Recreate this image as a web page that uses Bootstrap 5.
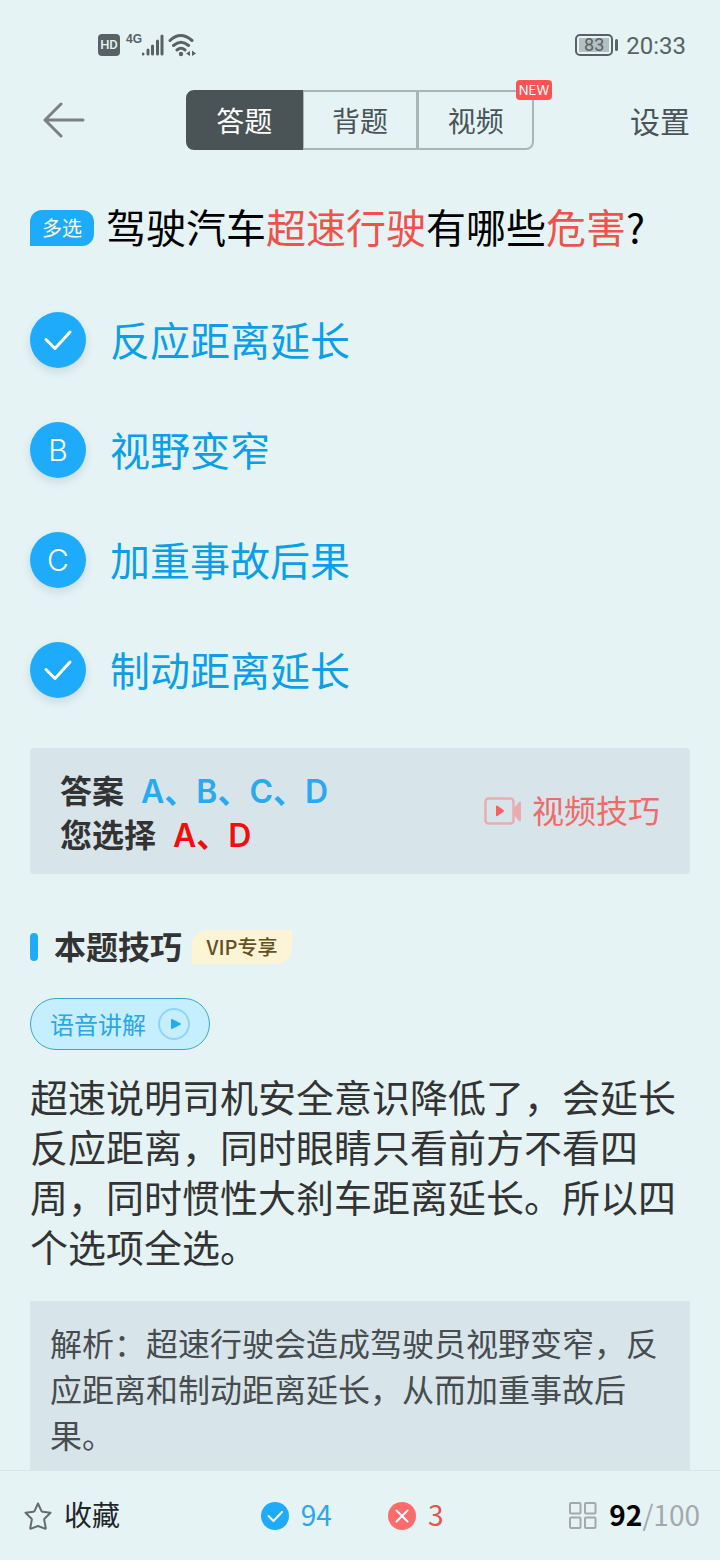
<!DOCTYPE html>
<html lang="zh-CN">
<head>
<meta charset="utf-8">
<meta name="viewport" content="width=device-width, initial-scale=1">
<title>答题</title>
<link rel="stylesheet" href="https://cdn.jsdelivr.net/npm/bootstrap@5.3.0/dist/css/bootstrap.min.css">
<style>
:root { --sky: #1eabfb; --page: #e5f3f5; --panel: #d7e5ea; --slate: #4a5456; }
body { background: var(--page); color: #333; font-family: "Noto Sans CJK SC", sans-serif; }
svg { display: block; flex: none; }
button { color: inherit; }
.latin { font-family: Inter, "Noto Sans CJK SC", sans-serif; }
.plain-btn { border: 0; background: none; padding: 0; }

.status-bar { height: 90px; padding: 0 34px 0 98px; color: #586264; }
.hd-mark { width: 22px; height: 22px; border-radius: 4px; background: #586264; color: var(--page); font: 500 13px/22px Roboto, sans-serif; text-align: center; }
.net-mark { font: 700 12px/14px "Liberation Sans", sans-serif; margin: 0 0 12px 6px; }
.battery { width: 38px; height: 22px; border: 2px solid #586264; border-radius: 5px; padding: 2px; }
.battery-level { background: #b3bfc1; font: 400 18px/14px Roboto, sans-serif; text-align: center; }
.battery-tip { width: 3px; height: 12px; border-radius: 2px; background: #586264; margin-left: 2px; }
.clock { font: 400 24px/28px Roboto, sans-serif; margin-left: 8px; padding-top: 2px; }

.top-row { height: 60px; padding: 0 30px; color: var(--slate); }
.back-btn { width: 60px; padding-left: 13px; }
.mode-tabs { width: 348px; }
.mode-tabs .btn { --bs-btn-color: #4a5456; --bs-btn-border-color: #a9b5b7; --bs-btn-border-width: 2px; --bs-btn-border-radius: 8px; --bs-btn-active-color: #fff; --bs-btn-active-bg: #4a5456; --bs-btn-active-border-color: #4a5456; --bs-btn-padding-x: 0; --bs-btn-padding-y: 0; flex: 1 1 0; height: 60px; font-size: 28px; line-height: 56px; }
.mode-tabs .btn + .btn { margin-left: -2px; }
.new-mark { position: absolute; top: -12px; right: -20px; width: 36px; height: 20px; border-radius: 4px; background: #fb5252; color: #fff; font: 400 13px/20px Inter, sans-serif; z-index: 2; }
.settings-btn { font-size: 30px; line-height: 60px; }

main { padding: 50px 30px 0; }
.question { font-size: 40px; line-height: 52px; color: #000; font-weight: 400; }
.question em { font-style: normal; color: #f0524b; }
.kind-tag { width: 64px; height: 36px; margin-top: 4px; border-radius: 12px 12px 12px 0; background: var(--sky); color: #fff; font-size: 20px; line-height: 36px; text-align: center; }
.options { margin-top: 60px; gap: 54px; }
.option { height: 56px; gap: 24px; font-size: 40px; line-height: 54px; color: #0b9fe9; cursor: pointer; }
.option-dot { width: 56px; height: 56px; border-radius: 50%; background: var(--sky); color: #fff; font: 300 30px/56px Inter, sans-serif; text-align: center; box-shadow: 0 4px 8px rgba(60, 90, 110, .16); }
.option-dot svg { display: none; margin: 14px; }
.btn-check:checked + .option svg { display: block; }
.btn-check:checked + .option .option-letter { display: none; }

.answer-box { margin-top: 50px; padding: 19px 30px; border-radius: 4px; background: var(--panel); font-size: 32px; line-height: 44px; font-weight: 700; }
.answer-box dl div { height: 44px; gap: 17px; }
.answer-box dt, .answer-box dd { margin: 0; font-weight: inherit; }
.answer-box dd { font-weight: 600; }
.video-link { color: #f26a68; font-weight: 400; gap: 10px; }

.tips-title { margin-top: 50px; height: 46px; }
.tips-title::before { content: ""; width: 8px; height: 28px; border-radius: 4px; background: var(--sky); margin-right: 16px; }
.tips-title h2 { font-size: 32px; line-height: 44px; font-weight: 700; }
.vip-tag { width: 100px; height: 34px; margin-left: 10px; border-radius: 16px 0 16px 0; background: #fdf3d5; color: #635126; font-size: 20px; line-height: 34px; font-weight: 500; text-align: center; }
.audio-btn { margin-top: 28px; width: 180px; height: 52px; border: 1px solid #3ba5d8; border-radius: 26px; background: #c5eeff; color: #2aa6ea; font-size: 24px; gap: 12px; }
.tips-text { margin: 21px 0 0; font-size: 38px; line-height: 50px; }
.analysis { margin: 30px 0 0; padding: 18px 20px 8px; background: var(--panel); color: #484c4e; font-size: 32px; line-height: 46px; }

.bottom-bar { display: grid; grid-template-columns: 12fr auto 13fr; align-items: center; height: 90px; padding: 0 20px 0 24px; border-top: 1px solid #dde6e7; background: var(--page); font-size: 28px; line-height: 40px; }
.bottom-bar span, .bottom-bar b { padding-bottom: 3px; }
.right-count { color: #2ba7ee; }
.wrong-count { color: #ec5049; }
</style>
</head>
<body class="d-flex flex-column min-vh-100">

<div class="status-bar d-flex align-items-center">
  <span class="hd-mark">HD</span>
  <span class="net-mark">4G</span>
  <svg class="me-1" width="22" height="22" viewBox="2 0 22 22" fill="none" stroke="#586264" stroke-width="3" stroke-linecap="round"><path d="M3 20v0M8 20v-4M12.500 20v-8M17.500 20V7M22 20V2"/></svg>
  <svg width="28" height="24" viewBox="0 0 28 24"><g fill="none" stroke="#586264" stroke-width="3" stroke-linecap="round"><path d="M2 7.500Q12.500-2.500 24 7.500M5.500 12.500q7.500-6.500 15 0M9 17q4-3.500 8 0"/></g><circle cx="13" cy="21" r="2.200" fill="#586264"/><path d="M22 18v5l-4-2.500zM24 17.500l4 3-4 2.500z" fill="#586264"/></svg>
  <span class="battery ms-auto"><span class="battery-level d-block">83</span></span>
  <span class="battery-tip"></span>
  <span class="clock">20:33</span>
</div>

<header class="top-row d-flex align-items-center justify-content-between">
  <button class="plain-btn back-btn" type="button" aria-label="返回">
    <svg width="42" height="36" viewBox="0 0 42 36" fill="none" stroke="#7b8081" stroke-width="3" stroke-linecap="round" stroke-linejoin="round"><path d="M18 2 2 18l16 16M2 18h38"/></svg>
  </button>
  <div class="mode-tabs btn-group">
    <button class="btn active" type="button">答题</button>
    <button class="btn" type="button">背题</button>
    <button class="btn" type="button">视频<span class="new-mark">NEW</span></button>
  </div>
  <button class="plain-btn settings-btn" type="button">设置</button>
</header>

<main class="flex-grow-1 d-flex flex-column">
  <div class="d-flex align-items-center">
    <span class="kind-tag flex-shrink-0 me-2">多选</span>
    <h1 class="question mb-0 ms-1">驾驶汽车<em>超速行驶</em>有哪些<em>危害</em>?</h1>
  </div>

  <div class="options d-flex flex-column">
    <div>
      <input class="btn-check" type="checkbox" id="opt-a" checked>
      <label class="option d-flex" for="opt-a"><span class="option-dot"><span class="option-letter">A</span><svg width="28" height="28" viewBox="0 0 28 28" fill="none" stroke="#fff" stroke-width="3" stroke-linecap="round" stroke-linejoin="round"><path d="m2 13.500 9 9L26 6"/></svg></span>反应距离延长</label>
    </div>
    <div>
      <input class="btn-check" type="checkbox" id="opt-b">
      <label class="option d-flex" for="opt-b"><span class="option-dot"><span class="option-letter">B</span></span>视野变窄</label>
    </div>
    <div>
      <input class="btn-check" type="checkbox" id="opt-c">
      <label class="option d-flex" for="opt-c"><span class="option-dot"><span class="option-letter">C</span></span>加重事故后果</label>
    </div>
    <div>
      <input class="btn-check" type="checkbox" id="opt-d" checked>
      <label class="option d-flex" for="opt-d"><span class="option-dot"><span class="option-letter">D</span><svg width="28" height="28" viewBox="0 0 28 28" fill="none" stroke="#fff" stroke-width="3" stroke-linecap="round" stroke-linejoin="round"><path d="m2 13.500 9 9L26 6"/></svg></span>制动距离延长</label>
    </div>
  </div>

  <section class="answer-box d-flex align-items-center justify-content-between">
    <dl class="mb-0">
      <div class="d-flex align-items-baseline"><dt>答案</dt><dd class="latin" style="color:#29a9f0">A、B、C、D</dd></div>
      <div class="d-flex align-items-baseline"><dt>您选择</dt><dd class="latin" style="color:#f20c0c">A、D</dd></div>
    </dl>
    <a class="video-link d-flex align-items-center text-decoration-none" href="#">
      <svg width="38" height="28" viewBox="0 0 38 28"><rect x="1.500" y="1.500" width="28" height="25" rx="3" fill="none" stroke="#e9adb0" stroke-width="2.500"/><path d="M30 11l5-6q2-1.500 2 1v17q0 2.500-2 1l-5-6z" fill="#e9adb0"/><path d="M12 9.500q0-1.500 1.500-.7l6 4.200q1 .9 0 1.800l-6 4.200q-1.500.8-1.500-.7z" fill="#f8605e"/></svg>
      <span class="pb-1">视频技巧</span>
    </a>
  </section>

  <div class="tips-title d-flex align-items-center">
    <h2 class="mb-0 pb-1">本题技巧</h2>
    <span class="vip-tag">VIP专享</span>
  </div>
  <button class="audio-btn d-flex align-items-center justify-content-center p-0" type="button">
    语音讲解
    <svg width="32" height="32" viewBox="0 0 32 32"><circle cx="16" cy="16" r="15" fill="none" stroke="#8fd5f8" stroke-width="2"/><path d="M13 12q0-1.500 1.500-.8l8 4q1 .8 0 1.600l-8 4q-1.500.7-1.500-.8z" fill="#1eabfb"/></svg>
  </button>
  <p class="tips-text">超速说明司机安全意识降低了，会延长反应距离，同时眼睛只看前方不看四周，同时惯性大刹车距离延长。所以四个选项全选。</p>
  <p class="analysis flex-grow-1">解析：超速行驶会造成驾驶员视野变窄，反应距离和制动距离延长，从而加重事故后果。</p>
</main>

<footer class="bottom-bar sticky-bottom">
  <button class="plain-btn d-flex align-items-center text-dark" type="button">
    <svg width="28" height="28" viewBox="0 0 28 28" fill="none" stroke="#666b6c" stroke-width="2" stroke-linejoin="round"><path d="M14 1.500l3.500 7.600q.3.600 1 .7l8 1-6 5.900q-.4.500-.3 1.200l1.600 8.200q0 .9-.9.500L14 24l-6.900 2.600q-.9.400-.9-.5l1.600-8.200q.1-.7-.3-1.200l-6-5.900 8-1q.7-.1 1-.7z"/></svg>
    <span class="ms-2 ps-1">收藏</span>
  </button>
  <div class="d-flex align-items-center">
    <svg width="28" height="28" viewBox="0 0 28 28"><circle cx="14" cy="14" r="14" fill="#1eabfb"/><path d="M7.500 14l5 5 8.500-9" fill="none" stroke="#fff" stroke-width="2" stroke-linecap="round" stroke-linejoin="round"/></svg>
    <span class="right-count ms-2 ps-1 me-5 pe-2">94</span>
    <svg width="28" height="28" viewBox="0 0 28 28"><circle cx="14" cy="14" r="14" fill="#ff6b6b"/><path d="M8.500 8.500l11 11m0-11l-11 11" fill="none" stroke="#fff" stroke-width="2" stroke-linecap="round"/></svg>
    <span class="wrong-count ms-2 ps-1">3</span>
  </div>
  <button class="plain-btn d-flex align-items-center justify-content-end" type="button">
    <svg width="28" height="28" viewBox="0 0 28 28" fill="none" stroke="#a3a9aa" stroke-width="2"><rect x="1" y="1" width="10.500" height="10.500" rx="1"/><rect x="16" y="1" width="10.500" height="10.500" rx="1"/><rect x="1" y="15.500" width="10.500" height="10.500" rx="1"/><rect x="16" y="15.500" width="10.500" height="10.500" rx="1"/></svg>
    <b class="text-black ms-2 ps-1">92</b><span style="color:#a3a9aa">/100</span>
  </button>
</footer>

<script src="https://cdn.jsdelivr.net/npm/bootstrap@5.3.0/dist/js/bootstrap.bundle.min.js"></script>
</body>
</html>
